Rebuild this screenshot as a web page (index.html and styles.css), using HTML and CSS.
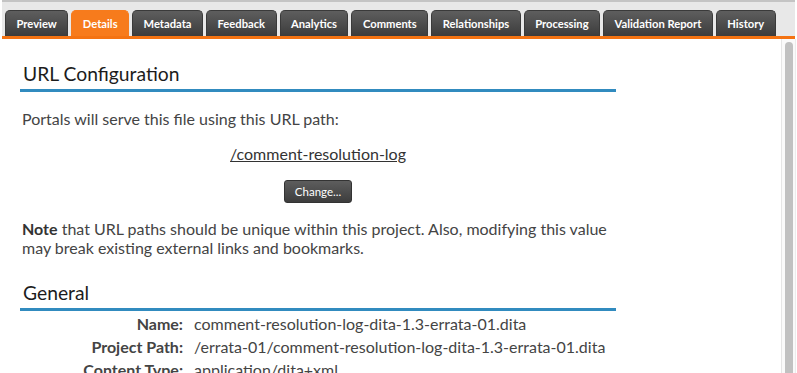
FILE: index.html
```html
<!DOCTYPE html>
<html lang="en">

<head>
    <meta charset="UTF-8">
    <meta name="viewport" content="width=device-width, initial-scale=1.0">
    <link rel="stylesheet" href="styles.css">
    <title>Details</title>
</head>

<body>
    <div class="tab-bar">
        <ul class="tabs">
            <li class="tab">Preview</li>
            <li class="tab active">Details</li>
            <li class="tab">Metadata</li>
            <li class="tab">Feedback</li>
            <li class="tab">Analytics</li>
            <li class="tab">Comments</li>
            <li class="tab">Relationships</li>
            <li class="tab">Processing</li>
            <li class="tab">Validation Report</li>
            <li class="tab">History</li>
        </ul>
    </div>

    <div class="page">
        <div class="content">
            <section class="section">
                <h2 class="section-title">URL Configuration</h2>
                <p class="text">Portals will serve this file using this URL path:</p>
                <p class="url-path"><a href="#">/comment-resolution-log</a></p>
                <div class="change-row">
                    <button class="change-btn">Change...</button>
                </div>
                <p class="text note"><strong>Note</strong> that URL paths should be unique within this project. Also, modifying this value may break existing external links and bookmarks.</p>
            </section>

            <section class="section">
                <h2 class="section-title">General</h2>
                <div class="props">
                    <div class="prop-name">Name:</div>
                    <div class="prop-value">comment-resolution-log-dita-1.3-errata-01.dita</div>
                    <div class="prop-name">Project Path:</div>
                    <div class="prop-value">/errata-01/comment-resolution-log-dita-1.3-errata-01.dita</div>
                    <div class="prop-name">Content Type:</div>
                    <div class="prop-value">application/dita+xml</div>
                </div>
            </section>
        </div>

        <div class="scrollbar">
            <div class="scroll-thumb"></div>
        </div>
    </div>
</body>

</html>
```

FILE: styles.css
```css
* {
    margin: 0;
    padding: 0;
    box-sizing: border-box;
}

body {
    font-family: Lato, 'Open Sans', sans-serif;
    background: #fff;
    color: #444;
    height: 373px;
    overflow: hidden;
}

.tab-bar {
    margin: 0 2px;
    padding: 8px 0 0 3px;
    background: #e8e8e8;
    border-top: 2px solid #c4c4c4;
    border-bottom: 3px solid #f47312;
}

.tabs {
    list-style: none;
    display: flex;
    gap: 3px;
}

.tab {
    height: 26px;
    padding: 0 10.5px;
    font-size: 11.2px;
    font-weight: bold;
    line-height: 26px;
    color: #fff;
    background: linear-gradient(#5e5e5e, #3c3c3c);
    border: 1px solid #3a3a3a;
    border-bottom: none;
    border-radius: 5px 5px 0 0;
    white-space: nowrap;
}

.tab.active {
    background: #f77b1c;
    border-color: #f77b1c;
}

.page {
    display: flex;
    height: 336px;
}

.content {
    flex: 1;
    padding-left: 20px;
}

.section {
    width: 596px;
}

.section-title {
    margin-top: 23px;
    padding: 0 0 3px 3px;
    font-size: 19.3px;
    font-weight: normal;
    line-height: 24px;
    color: #1c1c1c;
    border-bottom: 3px solid #318bbf;
}

.text {
    margin-top: 17px;
    padding-left: 2px;
    font-size: 16px;
    line-height: 19px;
}

.note {
    margin-top: 16px;
}

.note strong {
    color: #333;
}

.url-path {
    margin-top: 16px;
    font-size: 16px;
    line-height: 19px;
    text-align: center;
}

.url-path a {
    color: #333;
}

.change-row {
    margin-top: 17px;
    text-align: center;
}

.change-btn {
    height: 23px;
    padding: 0 10px;
    font-family: Lato, sans-serif;
    font-size: 11.5px;
    color: #fff;
    background: linear-gradient(#5d5d5d, #3d3d3d);
    border: 1px solid #333;
    border-radius: 3px;
}

.section + .section .section-title {
    margin-top: 24px;
}

.props {
    display: grid;
    grid-template-columns: 163px 1fr;
    column-gap: 11px;
    margin-top: 1px;
    font-size: 16px;
    line-height: 23px;
}

.prop-name {
    font-weight: bold;
    text-align: right;
}

.scrollbar {
    width: 15px;
    margin-right: 1px;
    padding: 3px 2px 0 3px;
    background: #fafafa;
    border-left: 1px solid #e6e6e6;
    border-right: 1px solid #ececec;
}

.scroll-thumb {
    height: 340px;
    background: #c1c1c1;
    border-radius: 4px 4px 0 0;
}
```
